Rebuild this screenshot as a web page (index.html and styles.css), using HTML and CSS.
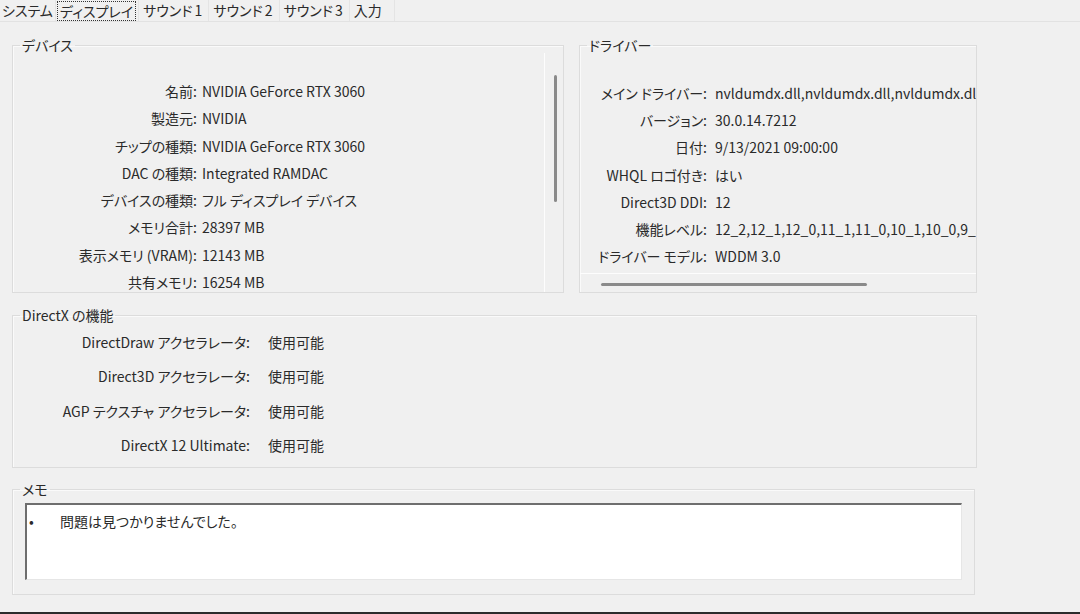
FILE: index.html
```html
<!DOCTYPE html>
<html lang="ja">
<head>
  <meta charset="UTF-8">
  <meta name="viewport" content="width=device-width, initial-scale=1.0">
  <title>DirectX 診断ツール - ディスプレイ</title>
  <link rel="stylesheet" href="styles.css">
</head>
<body>
  <div class="tabs">
    <div class="tab">システム</div>
    <div class="tab active"><span class="focus">ディスプレイ</span></div>
    <div class="tab">サウンド 1</div>
    <div class="tab">サウンド 2</div>
    <div class="tab">サウンド 3</div>
    <div class="tab">入力</div>
  </div>

  <div class="page">
    <div class="top-row">
      <fieldset class="group device">
        <legend>デバイス</legend>
        <div class="device-pane">
          <div class="rows device-rows">
            <div class="label">名前:</div><div class="value">NVIDIA GeForce RTX 3060</div>
            <div class="label">製造元:</div><div class="value">NVIDIA</div>
            <div class="label">チップの種類:</div><div class="value">NVIDIA GeForce RTX 3060</div>
            <div class="label">DAC の種類:</div><div class="value">Integrated RAMDAC</div>
            <div class="label">デバイスの種類:</div><div class="value">フル ディスプレイ デバイス</div>
            <div class="label">メモリ合計:</div><div class="value">28397 MB</div>
            <div class="label">表示メモリ (VRAM):</div><div class="value">12143 MB</div>
            <div class="label">共有メモリ:</div><div class="value">16254 MB</div>
          </div>
          <div class="vscroll"><div class="thumb"></div></div>
        </div>
      </fieldset>

      <fieldset class="group driver">
        <legend>ドライバー</legend>
        <div class="rows driver-rows">
          <div class="label">メイン ドライバー:</div><div class="value">nvldumdx.dll,nvldumdx.dll,nvldumdx.dll,nvldumdx.dll</div>
          <div class="label">バージョン:</div><div class="value">30.0.14.7212</div>
          <div class="label">日付:</div><div class="value">9/13/2021 09:00:00</div>
          <div class="label">WHQL ロゴ付き:</div><div class="value">はい</div>
          <div class="label">Direct3D DDI:</div><div class="value">12</div>
          <div class="label">機能レベル:</div><div class="value">12_2,12_1,12_0,11_1,11_0,10_1,10_0,9_3,9_2,9_1</div>
          <div class="label">ドライバー モデル:</div><div class="value">WDDM 3.0</div>
        </div>
        <div class="hscroll"><div class="thumb"></div></div>
      </fieldset>
    </div>

    <fieldset class="group directx">
      <legend>DirectX の機能</legend>
      <div class="rows dx-rows">
        <div class="label">DirectDraw アクセラレータ:</div><div class="value">使用可能</div>
        <div class="label">Direct3D アクセラレータ:</div><div class="value">使用可能</div>
        <div class="label">AGP テクスチャ アクセラレータ:</div><div class="value">使用可能</div>
        <div class="label">DirectX 12 Ultimate:</div><div class="value">使用可能</div>
      </div>
    </fieldset>

    <fieldset class="group memo">
      <legend>メモ</legend>
      <div class="memo-box">
        <div class="note"><span class="bullet">•</span>問題は見つかりませんでした。</div>
      </div>
    </fieldset>
  </div>

  <div class="window-edge"></div>
</body>
</html>
```

FILE: styles.css
```css
/* Base */
body {
  margin: 0;
  background: #f0f0f0;
  color: #2a2a2a;
  font-family: "Noto Sans CJK JP", "Noto Sans", sans-serif;
  font-size: 14px;
  font-feature-settings: "palt";
  height: 614px;
  overflow: hidden;
}

/* Tabs */
.tabs {
  display: flex;
  height: 21px;
  border-bottom: 1px solid #e2e2e2;
}

.tab {
  line-height: 20px;
  padding: 0 6px 0 4px;
  border-right: 1px solid #e4e4e4;
  white-space: nowrap;
  word-spacing: -1px;
}

.tab:first-child {
  padding-left: 2px;
  padding-right: 2px;
}

.tab:last-child {
  padding-right: 12px;
}

.tab.active {
  padding: 1px 2px 0 1px;
}

.tab .focus {
  display: block;
  line-height: 18px;
  padding: 0 2px;
  border: 1px dotted #333;
}

/* Page */
.page {
  padding: 15px 0 0 12px;
}

.top-row {
  display: flex;
  gap: 15px;
}

.group {
  margin: 0;
  padding: 0;
  min-width: 0;
  border: 1px solid #dcdcdc;
  box-shadow: inset 1px 1px 0 #fafafa;
}

.group legend {
  margin-left: 7px;
  padding: 0 2px;
  line-height: 16px;
}

.rows {
  display: grid;
  white-space: nowrap;
}

.label {
  text-align: right;
}

/* Device */
.device {
  width: 550px;
}

.device-pane {
  display: flex;
  height: 239px;
  overflow: hidden;
}

.device-rows {
  flex: 1;
  grid-template-columns: 184px 1fr;
  column-gap: 5px;
  row-gap: 11.3px;
  line-height: 16px;
  align-content: start;
  padding-top: 30px;
}

.vscroll {
  width: 19px;
  border-left: 1px solid #fdfdfd;
  padding-left: 9px;
  box-sizing: border-box;
}

.vscroll .thumb {
  width: 3px;
  height: 127px;
  margin-top: 22px;
  border-radius: 2px;
  background: #8a8a8a;
}

/* Driver */
.driver {
  width: 396px;
}

.driver-rows {
  grid-template-columns: 127px 1fr;
  column-gap: 8px;
  grid-auto-rows: 27.3px;
  align-items: center;
  padding-top: 26px;
  height: 194px;
  overflow: hidden;
}

.hscroll {
  height: 18px;
  border-top: 1px solid #fdfdfd;
  padding: 9px 0 0 21px;
  box-sizing: border-box;
}

.hscroll .thumb {
  width: 266px;
  height: 3px;
  border-radius: 2px;
  background: #8a8a8a;
}

/* DirectX */
.directx {
  width: 963px;
  margin-top: 14px;
}

.dx-rows {
  grid-template-columns: 237px 1fr;
  column-gap: 18px;
  grid-auto-rows: 34.3px;
  align-items: center;
  padding: 2px 0 5px;
}

/* Memo */
.memo {
  width: 963px;
  margin-top: 13px;
  padding: 6px 12px 14px;
  box-sizing: border-box;
}

.memo legend {
  margin-left: -5px;
}

.memo-box {
  height: 77px;
  box-sizing: border-box;
  background: #fff;
  border-top: 2px solid #6e6e6e;
  border-left: 2px solid #6e6e6e;
  border-right: 1px solid #e6e6e6;
  border-bottom: 1px solid #e6e6e6;
  padding: 7px 0 0 2px;
}

.note {
  line-height: 18px;
}

.bullet {
  display: inline-block;
  width: 31px;
}

.window-edge {
  height: 2px;
  margin-top: 17px;
  background: #2b2b2b;
}
```
